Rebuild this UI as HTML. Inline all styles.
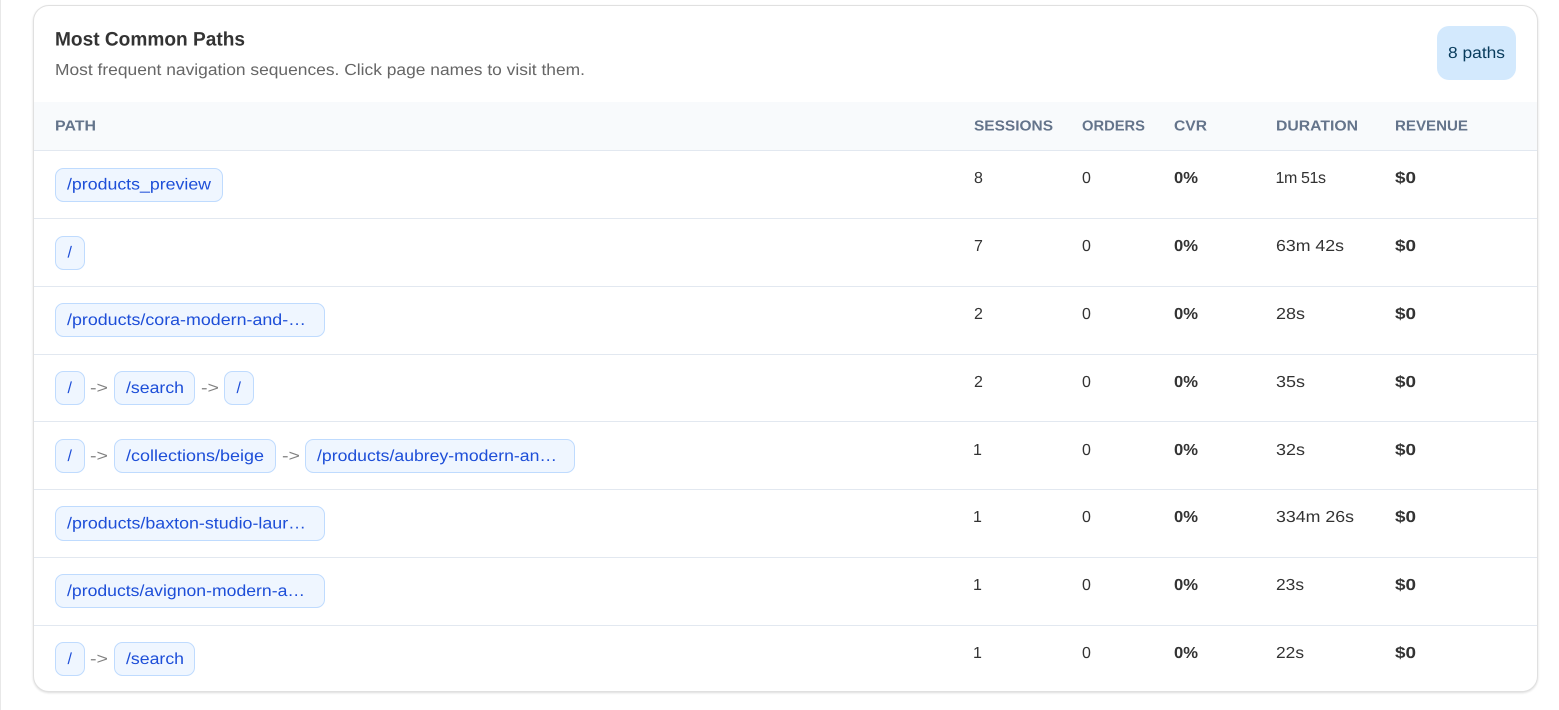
<!DOCTYPE html>
<html lang="en">
<head>
<meta charset="utf-8">
<title>Most Common Paths</title>
<style>
html,body{margin:0;padding:0;width:1559px;height:710px;overflow:hidden;background:#fff;font-family:"Liberation Sans",sans-serif}
#strip{position:absolute;left:0;top:0;width:1px;height:710px;background:#e8e8e8}
#card{position:absolute;left:33px;top:5px;width:1503px;height:685px;border:1px solid #e0e0e0;border-radius:16px;background:#fff;box-shadow:0 1px 2px rgba(0,0,0,.14);box-sizing:content-box}
svg{position:absolute;left:0;top:0}
text{font-family:"Liberation Sans",sans-serif;text-rendering:geometricPrecision}
.p{fill:#eff6ff;stroke:#bfdbfe;stroke-width:1}
.pt{font-size:16px;fill:#1d4ed8}
.a{font-size:16px;fill:#808080}
.h{font-size:14.5px;font-weight:700;fill:#64748b}
.v{font-size:16px;fill:#333}
.b{font-size:16px;font-weight:700;fill:#333}
.l{stroke:#e2e8f0;stroke-width:1}
</style>
</head>
<body>
<div id="strip"></div>
<div id="card"></div>
<svg width="1559" height="710" viewBox="0 0 1559 710" xmlns="http://www.w3.org/2000/svg">
<text x="55" y="45.5" font-size="19.5" font-weight="700" fill="#333" textLength="190" lengthAdjust="spacingAndGlyphs">Most Common Paths</text>
<text x="55" y="75" font-size="16" fill="#666" textLength="530" lengthAdjust="spacingAndGlyphs">Most frequent navigation sequences. Click page names to visit them.</text>
<rect x="1437" y="26" width="79" height="54" rx="12" fill="#d3e9fd"/>
<text x="1448" y="58" font-size="16" fill="#073b5c" textLength="57" lengthAdjust="spacingAndGlyphs">8 paths</text>

<rect x="34" y="102" width="1503" height="48" fill="#f8fafc"/>
<line class="l" x1="34" x2="1537" y1="150.5" y2="150.5"/>
<line class="l" x1="34" x2="1537" y1="218.5" y2="218.5"/>
<line class="l" x1="34" x2="1537" y1="286.5" y2="286.5"/>
<line class="l" x1="34" x2="1537" y1="354.5" y2="354.5"/>
<line class="l" x1="34" x2="1537" y1="421.5" y2="421.5"/>
<line class="l" x1="34" x2="1537" y1="489.5" y2="489.5"/>
<line class="l" x1="34" x2="1537" y1="557.5" y2="557.5"/>
<line class="l" x1="34" x2="1537" y1="625.5" y2="625.5"/>

<text class="h" x="55" y="130.5" textLength="41" lengthAdjust="spacingAndGlyphs">PATH</text>
<text class="h" x="974" y="130.5" textLength="79" lengthAdjust="spacingAndGlyphs">SESSIONS</text>
<text class="h" x="1082" y="130.5" textLength="63" lengthAdjust="spacingAndGlyphs">ORDERS</text>
<text class="h" x="1174" y="130.5" textLength="33" lengthAdjust="spacingAndGlyphs">CVR</text>
<text class="h" x="1276" y="130.5" textLength="82" lengthAdjust="spacingAndGlyphs">DURATION</text>
<text class="h" x="1395" y="130.5" textLength="73" lengthAdjust="spacingAndGlyphs">REVENUE</text>

<!-- row 1 -->
<rect class="p" x="55.5" y="168.5" width="167" height="33" rx="8"/>
<text class="pt" x="67" y="189.5" textLength="144" lengthAdjust="spacingAndGlyphs">/products_preview</text>
<text class="v" x="974" y="183">8</text>
<text class="v" x="1082" y="183">0</text>
<text class="b" x="1174" y="183" textLength="24" lengthAdjust="spacingAndGlyphs">0%</text>
<text class="v" x="1275.5" y="183" style="letter-spacing:-.4px">1m 51s</text>
<text class="b" x="1395" y="183" textLength="21" lengthAdjust="spacingAndGlyphs">$0</text>

<!-- row 2 -->
<rect class="p" x="55.5" y="236.5" width="29" height="33" rx="8"/>
<text class="pt" x="67.5" y="257.5">/</text>
<text class="v" x="974" y="251">7</text>
<text class="v" x="1082" y="251">0</text>
<text class="b" x="1174" y="251" textLength="24" lengthAdjust="spacingAndGlyphs">0%</text>
<text class="v" x="1276" y="251" textLength="68" lengthAdjust="spacingAndGlyphs">63m 42s</text>
<text class="b" x="1395" y="251" textLength="21" lengthAdjust="spacingAndGlyphs">$0</text>

<!-- row 3 -->
<rect class="p" x="55.5" y="303.5" width="269" height="33" rx="8"/>
<text class="pt" x="67" y="325" textLength="239" lengthAdjust="spacingAndGlyphs">/products/cora-modern-and-…</text>
<text class="v" x="974" y="319">2</text>
<text class="v" x="1082" y="319">0</text>
<text class="b" x="1174" y="319" textLength="24" lengthAdjust="spacingAndGlyphs">0%</text>
<text class="v" x="1276" y="319" textLength="29" lengthAdjust="spacingAndGlyphs">28s</text>
<text class="b" x="1395" y="319" textLength="21" lengthAdjust="spacingAndGlyphs">$0</text>

<!-- row 4 -->
<rect class="p" x="55.5" y="371.5" width="29" height="33" rx="8"/>
<text class="pt" x="67.5" y="393">/</text>
<text class="a" x="90" y="393" textLength="18" lengthAdjust="spacingAndGlyphs">-&gt;</text>
<rect class="p" x="114.5" y="371.5" width="80" height="33" rx="8"/>
<text class="pt" x="126" y="393" textLength="58" lengthAdjust="spacingAndGlyphs">/search</text>
<text class="a" x="201" y="393" textLength="18" lengthAdjust="spacingAndGlyphs">-&gt;</text>
<rect class="p" x="224.5" y="371.5" width="29" height="33" rx="8"/>
<text class="pt" x="236.5" y="393">/</text>
<text class="v" x="974" y="387">2</text>
<text class="v" x="1082" y="387">0</text>
<text class="b" x="1174" y="387" textLength="24" lengthAdjust="spacingAndGlyphs">0%</text>
<text class="v" x="1276" y="387" textLength="29" lengthAdjust="spacingAndGlyphs">35s</text>
<text class="b" x="1395" y="387" textLength="21" lengthAdjust="spacingAndGlyphs">$0</text>

<!-- row 5 -->
<rect class="p" x="55.5" y="439.5" width="29" height="33" rx="8"/>
<text class="pt" x="67.5" y="461">/</text>
<text class="a" x="90" y="461" textLength="18" lengthAdjust="spacingAndGlyphs">-&gt;</text>
<rect class="p" x="114.5" y="439.5" width="161" height="33" rx="8"/>
<text class="pt" x="126" y="461" textLength="138" lengthAdjust="spacingAndGlyphs">/collections/beige</text>
<text class="a" x="282" y="461" textLength="18" lengthAdjust="spacingAndGlyphs">-&gt;</text>
<rect class="p" x="305.5" y="439.5" width="269" height="33" rx="8"/>
<text class="pt" x="317" y="461" textLength="240" lengthAdjust="spacingAndGlyphs">/products/aubrey-modern-an…</text>
<text class="v" x="973" y="455">1</text>
<text class="v" x="1082" y="455">0</text>
<text class="b" x="1174" y="455" textLength="24" lengthAdjust="spacingAndGlyphs">0%</text>
<text class="v" x="1276" y="455" textLength="29" lengthAdjust="spacingAndGlyphs">32s</text>
<text class="b" x="1395" y="455" textLength="21" lengthAdjust="spacingAndGlyphs">$0</text>

<!-- row 6 -->
<rect class="p" x="55.5" y="506.5" width="269" height="34" rx="8"/>
<text class="pt" x="67" y="528.5" textLength="239" lengthAdjust="spacingAndGlyphs">/products/baxton-studio-laur…</text>
<text class="v" x="973" y="522">1</text>
<text class="v" x="1082" y="522">0</text>
<text class="b" x="1174" y="522" textLength="24" lengthAdjust="spacingAndGlyphs">0%</text>
<text class="v" x="1276" y="522" textLength="78" lengthAdjust="spacingAndGlyphs">334m 26s</text>
<text class="b" x="1395" y="522" textLength="21" lengthAdjust="spacingAndGlyphs">$0</text>

<!-- row 7 -->
<rect class="p" x="55.5" y="574.5" width="269" height="33" rx="8"/>
<text class="pt" x="67" y="596" textLength="238" lengthAdjust="spacingAndGlyphs">/products/avignon-modern-a…</text>
<text class="v" x="973" y="590">1</text>
<text class="v" x="1082" y="590">0</text>
<text class="b" x="1174" y="590" textLength="24" lengthAdjust="spacingAndGlyphs">0%</text>
<text class="v" x="1276" y="590" textLength="28" lengthAdjust="spacingAndGlyphs">23s</text>
<text class="b" x="1395" y="590" textLength="21" lengthAdjust="spacingAndGlyphs">$0</text>

<!-- row 8 -->
<rect class="p" x="55.5" y="642.5" width="29" height="33" rx="8"/>
<text class="pt" x="67.5" y="664">/</text>
<text class="a" x="90" y="664" textLength="18" lengthAdjust="spacingAndGlyphs">-&gt;</text>
<rect class="p" x="114.5" y="642.5" width="80" height="33" rx="8"/>
<text class="pt" x="126" y="664" textLength="58" lengthAdjust="spacingAndGlyphs">/search</text>
<text class="v" x="973" y="658">1</text>
<text class="v" x="1082" y="658">0</text>
<text class="b" x="1174" y="658" textLength="24" lengthAdjust="spacingAndGlyphs">0%</text>
<text class="v" x="1276" y="658" textLength="28" lengthAdjust="spacingAndGlyphs">22s</text>
<text class="b" x="1395" y="658" textLength="21" lengthAdjust="spacingAndGlyphs">$0</text>
</svg>
</body>
</html>
